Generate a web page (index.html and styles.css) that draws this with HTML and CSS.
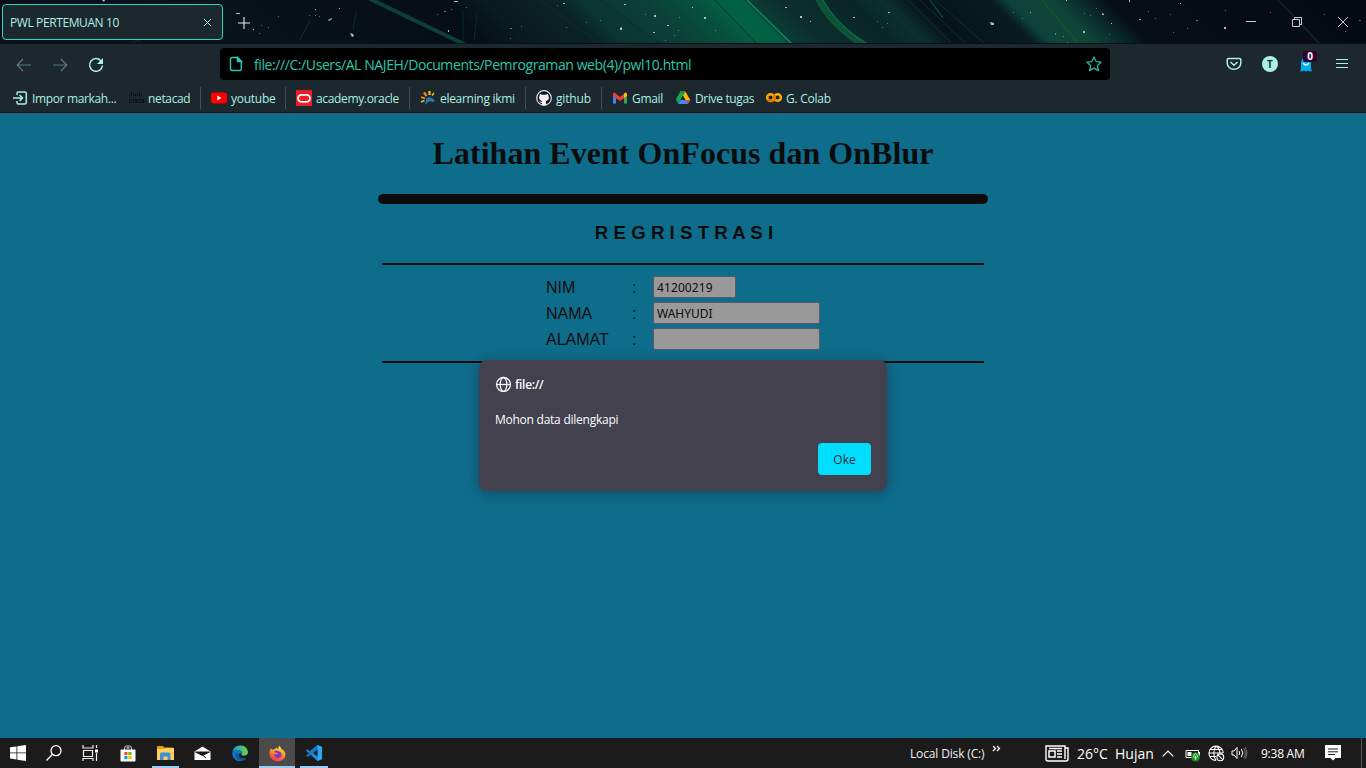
FILE: index.html
```html
<!DOCTYPE html>
<html lang="id">
<head>
<meta charset="utf-8">
<title>PWL PERTEMUAN 10</title>
<link rel="stylesheet" href="styles.css">
</head>
<body>
<div class="window">
  <header class="tabstrip">
    <svg class="sky" width="1366" height="44" viewBox="0 0 1366 44">
      <defs>
        <linearGradient id="aurora" gradientUnits="userSpaceOnUse" x1="0" y1="0" x2="1366" y2="0" gradientTransform="skewX(45)">
          <stop offset="0" stop-color="#080f18"/><stop offset=".15" stop-color="#08131a"/>
          <stop offset=".32" stop-color="#060d15"/><stop offset=".36" stop-color="#091d20"/>
          <stop offset=".405" stop-color="#0a2225"/><stop offset=".425" stop-color="#0b352f"/>
          <stop offset=".47" stop-color="#0b4036"/><stop offset=".505" stop-color="#07503c"/>
          <stop offset=".525" stop-color="#036143"/><stop offset=".543" stop-color="#036143"/>
          <stop offset=".548" stop-color="#0b3d34"/><stop offset=".57" stop-color="#0c2f2c"/>
          <stop offset=".62" stop-color="#0a2527"/><stop offset=".645" stop-color="#0b302e"/>
          <stop offset=".67" stop-color="#06121a"/><stop offset=".725" stop-color="#081c20"/>
          <stop offset=".738" stop-color="#0e4439"/><stop offset=".77" stop-color="#0f4438"/>
          <stop offset=".795" stop-color="#082423"/><stop offset=".81" stop-color="#070e17"/>
          <stop offset="1" stop-color="#060912"/>
        </linearGradient>
        <filter id="soft"><feGaussianBlur stdDeviation=".6"/></filter>
      </defs>
      <rect width="1366" height="44" fill="url(#aurora)"/>
      <g fill="none" filter="url(#soft)">
        <path d="M370-1l96 46" stroke="#0d4033" stroke-width="4"/>
        <path d="M818-2q14 28 48 48" stroke="#0a5238" stroke-width="7"/>
        <path d="M822-2q12 24 44 46" stroke="#0d7350"/>
        <path d="M747 0l45 44" stroke="#138a60" stroke-width="1.300"/>
        <path d="M540 0l60 44M560 0l58 44M600 0l60 44M715 0l42 44" stroke="#0a302c"/>
        <path d="M890 0l38 44M908 0l44 44M920 0l46 44M935 0l50 44" stroke="#0d322f"/>
        <path d="M930 0l13 18" stroke="#12664d"/>
        <path d="M1042 0l37 44" stroke="#0d562c" stroke-width="1.500"/>
        <path d="M1278 0l42 44" stroke="#0c2023" stroke-width="2"/>
        <path d="M310 20l-10 20M356 12l-3 18M463 10v30M477 14l-3 26M130 44l10-5 0 5" stroke="#0b2d2c"/>
      </g>
      <g fill="#a9c2c2">
        <path d="M102 0h3l-1 2zM236 13h4v1h-4zM315 9h1v1h-1zM328 20l4-2v1l-3 2zM339 8h1v1h-1zM350 33l3 1 1 2-2 1zM253 29h1v1h-1zM454 1h4v1h-4zM448 30h1v2h-1zM563 3h2v1h-2zM624 4h2v1h-2zM654 15h2v2h-2zM667 25h2v1h-2zM620 28l2-1v3h-2zM653 32h2v1h-2zM692 7h1v1h-1zM704 17h2v2h-2zM785 7h2v1h-2zM800 16h2v2h-2zM810 21h1v1h-1zM853 17h2v1h-2zM888 12h2v1h-2zM990 22l4 1v2h-3zM1030 12h1v1h-1zM1066 0h1v1h-1zM1102 13l2 1v1h-2zM1083 31h2v2h-2zM1129 0h1v2h-1zM1180 3h1v1h-1zM1224 27h2v2h-2zM1139 19h2v1h-2zM1111 23h1v1h-1z"/>
        <path opacity=".5" d="M309 15h1v1h-1zM315 15h1v1h-1zM319 16h1v1h-1zM261 25h1v1h-1zM268 27h1v1h-1zM259 33h1v1h-1zM278 16h1v1h-1zM437 14h1v1h-1zM444 11h2v1h-2zM451 9h1v1h-1zM466 7h1v1h-1zM510 28h2v1h-2zM510 38h1v1h-1zM521 26h1v1h-1zM557 5h1v1h-1zM566 27h1v1h-1zM586 22h1v1h-1zM600 20h1v1h-1zM645 14h1v1h-1zM678 30h1v1h-1zM674 35h1v1h-1zM679 17h1v1h-1zM715 30h1v1h-1zM665 40h1v1h-1zM877 21h1v1h-1zM887 23h1v1h-1zM882 27h1v1h-1zM1013 12h1v1h-1zM1022 18h1v1h-1zM1055 33h1v2h-1zM1063 36h1v1h-1zM1067 42h1v1h-1zM1084 13h1v1h-1zM1090 15h1v1h-1zM1096 8h1v1h-1zM1109 34h1v1h-1zM1148 11h1v1h-1zM1155 18h1v1h-1zM1170 14h1v1h-1zM1173 32h1v1h-1zM1196 20h2v1h-2zM1187 28h1v1h-1zM1225 10h1v1h-1zM1270 12h1v1h-1zM1324 14h1v1h-1zM1345 31h1v1h-1zM1359 20h2v1h-2z"/>
      </g>
      <path d="M0 43.5h1366" stroke="#071015"/>
    </svg>
    <div class="tab"><span class="t-tab">PWL PERTEMUAN 10</span>
      <svg width="9" height="9" viewBox="0 0 9 9"><path d="M1 1l7 7M8 1l-7 7" stroke="#a9efe3"/></svg>
    </div>
    <svg class="newtab" width="12" height="12" viewBox="0 0 12 12"><path d="M6 0v12M0 6h12" stroke="#d5f1e9" stroke-width="1.100"/></svg>
    <svg class="winctl" width="104" height="12" viewBox="0 0 104 12" fill="none" stroke="#c5cdd0"><path d="M0 5.500h10M46.500 3.500h7v7h-7zM48.500 3v-1.500h7v7H54M92 1l10 10M102 1l-10 10"/></svg>
  </header>

  <nav class="toolbar">
    <div class="navbtns">
      <svg width="16" height="16" viewBox="0 0 16 16" class="dim"><path d="M15 8H1.500M7 2L1.200 8 7 14"/></svg>
      <svg width="16" height="16" viewBox="0 0 16 16" class="dim"><path d="M1 8h13.500M9 2l5.800 6L9 14"/></svg>
      <svg width="16" height="16" viewBox="0 0 16 16" class="mint"><path d="M13.300 4.300A6.400 6.400 0 1 0 14.400 8.500" stroke-width="1.500"/><path d="M15 1v6H9z" fill="#a9efe3" stroke="none"/></svg>
    </div>
    <div class="urlbar">
      <svg width="14" height="16" viewBox="0 0 14 16" fill="none" stroke="#2bc8ae" stroke-width="1.400"><path d="M3 1.500h5.500L12.300 5.300V13q0 1.500-1.500 1.500H3Q1.500 14.500 1.500 13V3Q1.500 1.500 3 1.500z"/><path d="M8.500 1.500v4h4z" fill="#2bc8ae"/></svg>
      <span class="t-url">file:///C:/Users/AL NAJEH/Documents/Pemrograman web(4)/pwl10.html</span>
      <svg width="16" height="16" viewBox="0 0 16 16" fill="none" stroke="#2bb39e" stroke-width="1.300" stroke-linejoin="round"><path d="M8 1l2.100 4.600 5 .6-3.700 3.400 1 5L8 12.100l-4.400 2.500 1-5L.9 6.200l5-.6z"/></svg>
    </div>
    <div class="actions">
      <svg width="16" height="16" viewBox="0 0 16 16" class="mint"><path d="M2.500 2.500h11q1.300 0 1.300 1.300V7a6.800 6.300 0 0 1-13.600 0V3.800q0-1.300 1.300-1.300zM4.500 6L8 9.300 11.500 6" stroke-width="1.500"/></svg>
      <span class="avatar">T</span>
      <span class="ghost">
        <svg width="14" height="16" viewBox="0 0 14 16"><path d="M2 13V7a5 6 0 0 1 10 0v6l1 2-2 .5L9 14.500l-2 1-2-1-2 1-2-.5z" fill="#00aef0"/><path d="M4 7q3 4 6 0" stroke="#d9ffff" fill="none" stroke-width="1.300"/><path d="M5 4v1M9 4v1" stroke="#fff"/></svg>
        <b class="badge">0</b>
      </span>
      <svg width="14" height="12" viewBox="0 0 14 12"><path d="M1 1.500h12M1 5.500h12M1 9.500h12" stroke="#a9efe3" stroke-width="1.200"/></svg>
    </div>
  </nav>

  <nav class="bookmarks">
    <a class="bm first"><svg width="16" height="16" viewBox="0 0 16 16" class="mint"><path d="M5 5V3.500Q5 2 6.500 2h6.300Q14.300 2 14.300 3.500v9q0 1.500-1.500 1.500H6.500Q5 14 5 12.500V11M1 8h9M7.500 5l3 3-3 3" stroke-width="1.500"/></svg><span class="t-imp">Impor markah...</span></a>
    <a class="bm sep second"><svg width="16" height="16" viewBox="0 0 16 16"><path d="M1.500 4v2M3.500 2v4M5.500 3.500V6M7.500 4v2M9.500 3.500V6M11.500 2v4M13.500 3.500V6" stroke="#0b1013"/><path d="M4 9.500H1.500v3H4M5.500 9v4M9.500 9.500H7.300v1.500h2v1.500H7M13 9.500h-2v3h2M14 9.500h1.500v3H14z" stroke="#0b1013" fill="none"/></svg><span class="t-net">netacad</span></a>
    <a class="bm sep"><svg width="16" height="16" viewBox="0 0 16 16"><rect y="2.500" width="16" height="11" rx="3" fill="#f00"/><path d="M6.300 5.500v5L10.500 8z" fill="#fff"/></svg><span class="t-you">youtube</span></a>
    <a class="bm sep"><svg width="16" height="16" viewBox="0 0 16 16"><path d="M0 0h16v16H0z" fill="#ee1c25"/><rect x="2" y="4.800" width="12" height="7" rx="3.500" fill="none" stroke="#fff" stroke-width="1.800"/></svg><span class="t-ora">academy.oracle</span></a>
    <a class="bm sep"><svg width="16" height="16" viewBox="0 0 16 16"><path d="M4 2.500l2.500 3.500" stroke="#f98012" stroke-width="2.300"/><path d="M9.500 1v4" stroke="#f7b916" stroke-width="2.200"/><path d="M14 3l-2 2.500" stroke="#f7b916" stroke-width="1.500"/><path d="M1 7l4 1.500" stroke="#f7941d" stroke-width="1.800"/><path d="M1 12l3.500-1.500" stroke="#b8c936" stroke-width="1.800"/><path d="M6 8.500l3-1.500 4 1.500 2 3-2.500.5-3-1-2 1.500-1.500 2-1-.5 1-3z" fill="#2976ad"/></svg><span class="t-ele">elearning ikmi</span></a>
    <a class="bm sep"><svg width="16" height="16" viewBox="0 0 16 16"><circle cx="8" cy="8" r="7.300" fill="#10171c" stroke="#e6e4eb" stroke-width="1.200"/><path d="M4 3.800l2 1h4l2-1 .5 2.200q1.500 4-2.500 5v4H6v-2q-2 0-2.700-2 1.500 1 2.700.5V11q-4-1-2.500-5z" fill="#f4f2fa"/></svg><span class="t-git">github</span></a>
    <a class="bm"><svg width="16" height="16" viewBox="0 0 16 16"><path d="M1 4v9.500h3V7z" fill="#4285f4"/><path d="M15 4v9.500h-3V7z" fill="#34a853"/><path d="M1 3.500L2.500 2.500 8 7l5.500-4.500L15 3.500V6L8 11 1 6z" fill="#ea4335"/><path d="M12 3.700l1.500-1.200L15 3.500V6l-3 2z" fill="#fbbc04"/></svg><span class="t-gma">Gmail</span></a>
    <a class="bm"><svg width="16" height="16" viewBox="0 0 16 16"><path d="M5.300 1.500L1 9.500 3.300 14 8 5.500z" fill="#0faa55"/><path d="M5.300 1.500h5l5 8.500h-5z" fill="#fbbc04"/><path d="M5.500 10h9.700l-2.300 4H3.300z" fill="#4285f4"/><path d="M5.300 1.500h5L8 6z" fill="#17914a"/><path d="M5.500 10L8 5.600 10.500 10z" fill="#1c282d"/><path d="M11 10h4.200l-2.300 4z" fill="#ea4335"/></svg><span class="t-dri">Drive tugas</span></a>
    <a class="bm"><svg width="16" height="16" viewBox="0 0 16 16" fill="none" stroke-width="2.500"><circle cx="4.500" cy="7.500" r="3.300" stroke="#f9ab00"/><circle cx="11.600" cy="7.500" r="3.300" stroke="#f9ab00"/><path d="M7 10.200a3.500 3.500 0 0 1-5.300-.8M9.300 5.100A3.300 3.300 0 0 0 9.300 10" stroke="#e8710a"/></svg><span class="t-col">G. Colab</span></a>
  </nav>

  <main class="page">
    <h1><span class="t-h1">Latihan Event OnFocus dan OnBlur</span></h1>
    <div class="thick"></div>
    <h2>R E G R I S T R A S I</h2>
    <div class="rule"></div>
    <form class="fields">
      <label>NIM</label><span>:</span><input class="short" value="41200219">
      <label>NAMA</label><span>:</span><input value="WAHYUDI">
      <label>ALAMAT</label><span>:</span><input>
    </form>
    <div class="rule"></div>
    <section class="dialog">
      <div class="origin"><svg width="16" height="16" viewBox="0 0 16 16" fill="none" stroke="#f4f3f8" stroke-width="1.300"><circle cx="8.500" cy="8.500" r="7"/><ellipse cx="8.500" cy="8.500" rx="3.300" ry="7"/><path d="M1.500 8.500h14"/></svg><b class="t-file">file://</b></div>
      <p><span class="t-msg">Mohon data dilengkapi</span></p>
      <button><span class="t-oke">Oke</span></button>
    </section>
  </main>

  <footer class="taskbar">
    <div class="apps">
      <i><svg width="16" height="16" viewBox="0 0 16 16" fill="#fff"><path d="M0 2.300l6.500-.9v6.100H0zM7.300 1.300L16 0v7.500H7.300zM0 8.300h6.500v6.200L0 13.600zM7.300 8.300H16V16l-8.700-1.300z"/></svg></i>
      <i><svg width="16" height="16" viewBox="0 0 16 16" fill="none" stroke="#fff" stroke-width="1.300"><circle cx="10" cy="5.700" r="5"/><path d="M6.500 9.200L.5 15.500"/></svg></i>
      <i><svg width="17" height="16" viewBox="0 0 17 16" fill="none" stroke="#eee" stroke-width="1.200"><path d="M1 0v3h10V0M1.500 5.500h9v6h-9zM1 16v-2.500h10V16M14.500 0v3M14.500 8v8"/><path d="M13 4.500h3v3h-3z" fill="#fff" stroke="none"/></svg></i>
      <i><svg width="16" height="17" viewBox="0 0 16 17"><path d="M4.500 5V3q0-2 2-2h3q2 0 2 2v2M7 4V2.500q1-1 2 0V4" fill="none" stroke="#ccc"/><path d="M.5 4.500h15v11q0 1-1 1h-13q-1 0-1-1z" fill="#fff"/><path d="M4.300 7h3.200v3.200H4.300z" fill="#f25022"/><path d="M8.300 7h3.200v3.200H8.300z" fill="#7fba00"/><path d="M4.300 11h3.200v3.200H4.300z" fill="#00a4ef"/><path d="M8.300 11h3.200v3.200H8.300z" fill="#ffb900"/></svg></i>
      <i class="open"><svg width="17" height="16" viewBox="0 0 17 16"><path d="M0 1h6l1.500 1.500H16v5H0z" fill="#e59b0b"/><path d="M0 4h7l1-1h9v12H0z" fill="#ffd15c"/><path d="M3 15V9q0-1.500 1.500-1.500h7.500q1.500 0 1.500 1.500v6h-3v-3.500h-4V15z" fill="#3e91d5"/></svg></i>
      <i><svg width="17" height="15" viewBox="0 0 17 15"><path d="M.5 5.500l8-5 8 5V14H.5z" fill="#fff"/><path d="M1.500 6h14L8.500 9.500zM8.500 9l3.500 3" fill="#181818" stroke="#181818"/></svg></i>
      <i><svg width="16" height="16" viewBox="0 0 16 16"><defs><linearGradient id="edge" x1="0" x2="1"><stop stop-color="#1595d6"/><stop offset="1" stop-color="#6bd947"/></linearGradient></defs><path d="M.3 7A8 8 0 0 1 15.900 6.500Q16 11 11.200 10.800 9 10.500 9.500 9 10.500 6 7 5 3.500 4.500.3 7z" fill="url(#edge)"/><path d="M.2 8Q2 4.300 6 5q4 .7 3.500 4Q8 7.500 7 9.500q-.5 4 4 4 2 0 3.500-1Q11 17 6 16 .5 14.500.2 8z" fill="#127bc4"/><path d="M3 9q0 6 6 7 3 0 5.500-3-3 1.500-5.500 0-3-1.500-2-4.500Q4 7.500 3 9z" fill="#0c59a4"/></svg></i>
      <i class="open active"><svg width="17" height="17" viewBox="0 0 17 17"><defs><linearGradient id="fox" x1=".7" y1="0" x2=".3" y2="1"><stop stop-color="#ffe43a"/><stop offset=".45" stop-color="#ff9a20"/><stop offset="1" stop-color="#f52758"/></linearGradient></defs><path d="M2 3l1 2q1-1 3-1L7.500 2.500 9 4l1-3.500Q12 2 12.500 4q3 1 4 4.500Q16.500 16 9 16.500 1 16 .5 9 .5 5 2 3z" fill="url(#fox)"/><path d="M5 7q1-2 3-1.500l2 1q3 1 2.500 3.500-.8 3.200-4 3Q5 12.500 5.200 9l3 .5L9 8.300z" fill="#7b38c8"/></svg></i>
      <i class="open"><svg width="16" height="16" viewBox="0 0 16 16"><path d="M11.500 0L16 2v12l-4.500 2L0 5.500l1.200-1.200 2.600 2z" fill="#1b8fdb"/><path d="M11.500 0v4.500L1.500 12 0 10.700z" fill="#1479bd"/><path d="M11.500 0L16 2v12l-4.500 2z" fill="#2aa9f2"/><path d="M11.500 4.500v7L7 8z" fill="#18202a"/></svg></i>
    </div>
    <div class="disk"><span class="t-disk">Local Disk (C:)</span><svg width="9" height="8" viewBox="0 0 9 8" fill="none" stroke="#fff" stroke-width="1.300"><path d="M1 1l2.500 2.500L1 6M5 1l2.500 2.500L5 6"/></svg></div>
    <div class="tray">
      <svg class="news" width="24" height="17" viewBox="0 0 24 17" fill="none" stroke="#fff" stroke-width="1.400"><path d="M20 2.500V1H1v13q0 2 2 2h18q2 0 2-2V3h-3v11"/><path d="M4 6h6v6H4zM12 6h5M12 9h5M12 12h5M4 3.500h13" stroke-width="1.500"/></svg>
      <span class="t-temp">26°C</span><span class="t-huj">Hujan</span>
      <svg class="chev" width="12" height="7" viewBox="0 0 12 7"><path d="M.7 6.300L6 1l5.300 5.300" fill="none" stroke="#fff" stroke-width="1.200"/></svg>
      <svg class="batt" width="16" height="14" viewBox="0 0 16 14"><path d="M1 2.500h12.500v7H1zM14.500 4v4" fill="none" stroke="#fff"/><path d="M2.500 4h4v4h-4z" fill="#fff"/><circle cx="10.500" cy="9" r="4.500" fill="#149124"/><path d="M10.500 12V8M8.500 8.500Q9 6 10.500 5.500 12 6 12.500 8.500 11.500 10.500 10.500 10 9 10 8.500 8.500z" stroke="#fff" fill="none" stroke-width=".8"/></svg>
      <svg class="net" width="17" height="17" viewBox="0 0 17 17" fill="none" stroke="#fff" stroke-width="1.100"><path d="M8 15.500A7.200 7.200 0 1 1 15.300 8M8 15.500Q3.500 8 8 1q4 3 4 7M1 8h14M2 4.500h12.500M2 11.500h6"/><circle cx="12.300" cy="12.300" r="3.400" fill="#1b1b1b"/><path d="M10 10l4.700 4.700"/></svg>
      <svg class="vol" width="17" height="14" viewBox="0 0 17 14" fill="none" stroke="#fff"><path d="M1 5h2l3-3.500v11L3 9H1zM8 5q1.500 2 0 4M10.300 3q3 4 0 8"/><path d="M12.500 2q3.500 5 0 10M14.500 1q3 6 0 12" stroke="#777"/></svg>
      <span class="t-time">9:38 AM</span>
      <svg class="note" width="16" height="16" viewBox="0 0 16 16"><path d="M0 0h16v13h-5.500L8 15.500 5.500 13H0z" fill="#fff"/><path d="M3 4h10M3 6.800h10M3 9.500h7" stroke="#202020"/></svg>
      <span class="peek"></span>
    </div>
  </footer>
</div>
</body>
</html>
```
FILE: styles.css
```css
* { box-sizing: border-box; }
body { margin: 0; font-family: "Open Sans", "Noto Sans", sans-serif; font-size: 12px; overflow: hidden; }
svg { display: block; flex: none; }
span, b { white-space: nowrap; }
.window { width: 1366px; height: 768px; display: flex; flex-direction: column; background: #1c282d; }
.mint { fill: none; stroke: #a9efe3; }
.dim { fill: none; stroke: #537b7b; stroke-width: 1.2; }

.tabstrip { height: 44px; display: flex; align-items: center; position: relative; flex: none; }
.sky { position: absolute; inset: 0; }
.tab { position: relative; width: 221px; height: 36px; margin-left: 2px; border: 1px solid #2bd9bf; border-radius: 4px; background: #1c282d; color: #a9efe3; display: flex; align-items: center; justify-content: space-between; padding: 0 10px 0 7px; }
.newtab { position: relative; margin-left: 15px; margin-top: 1px; }
.winctl { position: relative; margin: 0 16px 0 auto; }

.toolbar { height: 42px; display: flex; align-items: center; flex: none; }
.navbtns { width: 220px; padding-left: 16px; display: flex; gap: 20px; }
.urlbar { width: 890px; height: 32px; margin-bottom: 2px; border-radius: 4px; background: #000; color: #2bc8ae; display: flex; align-items: center; padding: 0 8px 0 9px; font-size: 14px; }
.urlbar .t-url { margin-left: 11px; margin-right: auto; padding-top: 1px; }
.actions { display: flex; align-items: center; padding-left: 116px; gap: 20px; margin-bottom: 2px; }
.avatar { width: 16px; height: 16px; border-radius: 50%; background: #a9efe3; color: #1c282d; font: bold 10px/16px "Open Sans", sans-serif; text-align: center; }
.ghost { position: relative; width: 16px; padding-left: 1px; margin-right: 1px; }
.badge { position: absolute; left: 5px; top: -5px; width: 14px; height: 11px; border-radius: 2px; background: #330033; color: #fff; font: bold 10px/11px "Open Sans", sans-serif; text-align: center; }

.bookmarks { height: 27px; border-bottom: 1px solid #0b1216; display: grid; grid-template-columns: 116px 85px 85px 124px 116px 76px 63px 91px 100px; color: #a9efe3; align-items: start; flex: none; }
.bm { height: 22px; margin-top: 1px; display: flex; align-items: center; gap: 4px; padding-left: 10px; }
.bm span { line-height: 22px; padding-top: 1px; }
.bm.first { padding-left: 12px; }
.bm.second { padding-left: 12px; }
.sep { border-right: 1px solid #3d5256; }

.page { height: 625px; background: #0f6d8c; display: flex; flex-direction: column; align-items: center; color: #0c0c0d; flex: none; }
h1 { margin: 20px 0 0; height: 40px; font: bold 32px/40px "Liberation Serif", serif; }
.thick { width: 610px; height: 10px; margin-top: 21px; border-radius: 5px; background: #0c0c0d; }
h2 { margin: 17px 0 0; height: 24px; padding-left: 2px; font: bold 18.72px/24px "Liberation Sans", sans-serif; white-space: nowrap; }
.rule { width: 602px; height: 2px; margin-top: 18px; background: #0c0c0d; }
.fields { display: grid; grid-template-columns: 86px 21px 167px; grid-auto-rows: 22px; row-gap: 4px; margin-top: 11px; font: 16px/24px "Liberation Sans", sans-serif; }
.fields input { width: 167px; height: 22px; border: 1px solid #5b5b66; border-radius: 2px; background: #99999a; color: #0c0c0d; padding: 0 3px; font: 12px "Noto Sans", sans-serif; }
.fields .short { width: 83px; letter-spacing: .1px; }
.fields + .rule { margin-top: 11px; }
.dialog { position: relative; width: 408px; height: 131px; margin-top: -3px; border-radius: 8px; background: #42414d; color: #fbfbfe; box-shadow: 0 2px 14px rgba(12, 12, 13, .35); padding: 16px; display: flex; flex-direction: column; }
.origin { display: flex; gap: 4px; align-items: center; height: 16px; }
.dialog p { margin: 18px 0 0; height: 20px; line-height: 20px; }
.dialog button { margin-top: 13px; align-self: flex-end; width: 53px; height: 32px; border: 0; border-radius: 4px; background: #00ddff; color: #2b2a33; font: 12px "Open Sans", sans-serif; padding: 0; }

.taskbar { height: 30px; background: #1b1b1b; color: #eee; display: flex; flex: none; }
.apps { display: grid; grid-template-columns: 36px 36px 36px 39px 37px 37px 38px 36px 38px; width: 333px; }
.apps i { display: flex; align-items: center; justify-content: center; position: relative; }
.apps .active { background: #4b4b4b; }
.apps .open::after { content: ""; position: absolute; left: 5px; right: 5px; bottom: 0; height: 2px; background: #99cdf5; }
.apps .active::after { left: 0; right: 0; }
.disk { width: 712px; padding-left: 577px; display: flex; align-items: center; gap: 8px; }
.disk svg { margin-bottom: 9px; }
.tray { display: flex; align-items: center; width: 321px; color: #fff; }
.t-temp, .t-huj { font-size: 14px; }
.t-temp { margin-left: 8px; width: 38px; }
.t-huj { width: 47px; }
.batt { margin-left: 11px; margin-top: 3px; }
.net { margin-left: 7px; }
.vol { margin-left: 6px; }
.t-time { margin-left: 13px; width: 64px; }
.peek { width: 1px; height: 30px; background: #555; margin-left: 20px; }

.t-tab { letter-spacing: -.4px; }
.t-url { letter-spacing: -.41px; }
.t-imp { letter-spacing: -.35px; }
.t-net { letter-spacing: -.35px; }
.t-you { letter-spacing: -.25px; }
.t-ora { letter-spacing: -.35px; }
.t-ele { letter-spacing: -.3px; }
.t-git { letter-spacing: -.15px; }
.t-gma { letter-spacing: -.3px; }
.t-dri { letter-spacing: -.35px; }
.t-col { letter-spacing: -.25px; }
.t-msg { letter-spacing: -.25px; }
.t-disk { letter-spacing: -.15px; }
.t-time { letter-spacing: -.25px; }
.t-h1 { letter-spacing: .04px; }
.t-file { font-weight: 600; letter-spacing: -.3px; padding-top: 1px; }
```
